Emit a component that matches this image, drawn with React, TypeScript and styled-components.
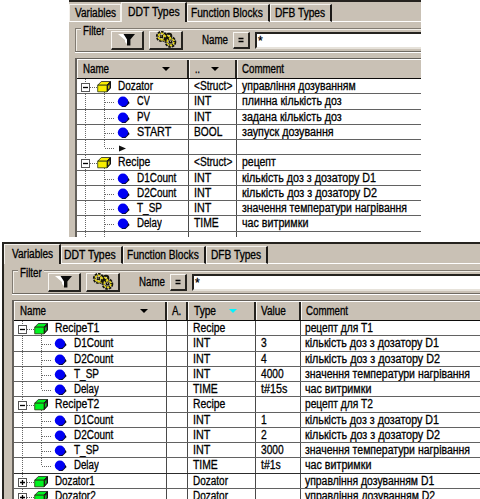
import React, { useLayoutEffect, useRef, useState } from "react";
import styled, { createGlobalStyle } from "styled-components";

const face = "#c9c1b5";
const ROW = 15.25;

const Global = createGlobalStyle`
  body { margin: 0; background: #fff; }
  #root { font-family: "Liberation Sans", Arial, sans-serif; font-size: 12px; color: #000; }
`;

const Page = styled.main`
  width: 480px;
  height: 499px;
  overflow: hidden;
  display: flex;
  flex-direction: column;
  gap: 5px;
  background: #fff;
`;

const Panel = styled.section<{ $left: number; $width: number; $height: number; $framed?: boolean }>`
  box-sizing: border-box;
  flex: none;
  width: ${(p) => p.$width}px;
  height: ${(p) => p.$height}px;
  margin-left: ${(p) => p.$left}px;
  border-top: 2px solid #25231f;
  border-left: ${(p) => (p.$framed ? "2px solid #25231f" : "0")};
  background: ${face};
  overflow: hidden;
`;

const Tabs = styled.div`
  display: flex;
  align-items: flex-end;
  height: 20px;
`;

const Tab = styled.div<{ $width: number; $pad: number; $active?: boolean; $plain?: boolean }>`
  box-sizing: border-box;
  flex: none;
  width: ${(p) => p.$width}px;
  height: ${(p) => (p.$active ? 20 : 18)}px;
  padding-left: ${(p) => p.$pad}px;
  line-height: ${(p) => (p.$active ? 18 : 17)}px;
  border-top: 1px solid #f4f1ec;
  border-left: 1px solid #f4f1ec;
  border-right: ${(p) => (p.$plain ? "1px solid #f4f1ec" : "2px solid #1c1a18")};
  border-bottom: ${(p) => (p.$active ? "0" : "1px solid #fff")};
`;

const TabRest = styled.div`
  flex: 1;
  height: 1px;
  background: #fff;
`;

const Filter = styled.div<{ $inset: number }>`
  box-sizing: border-box;
  display: flex;
  align-items: center;
  height: 24px;
  margin: 6px 0 0 ${(p) => p.$inset}px;
  border-top: 1px solid #817b72;
  border-left: 1px solid #817b72;
  border-bottom: 1px solid #6f6a62;
  box-shadow: inset 1px 1px #f1eee8, 0 1px #fff;
`;

const Legend = styled.span`
  align-self: flex-start;
  width: 26px;
  height: 14px;
  margin: -5px 0 0 5px;
  padding-left: 2px;
  box-sizing: border-box;
  line-height: 14px;
  background: ${face};
`;

const Button = styled.span<{ $width: number; $height: number; $gap: number }>`
  box-sizing: border-box;
  flex: none;
  display: flex;
  align-items: center;
  justify-content: center;
  width: ${(p) => p.$width}px;
  height: ${(p) => p.$height}px;
  margin-left: ${(p) => p.$gap}px;
  border: 1px solid #f8f6f2;
  border-right: 2px solid #25231f;
  border-bottom: 2px solid #25231f;
`;

const FieldName = styled.span`
  width: 31px;
  margin-left: 19px;
  line-height: 14px;
`;

const Input = styled.span`
  box-sizing: border-box;
  flex: 1;
  height: 17px;
  margin-left: 5px;
  padding-left: 1px;
  line-height: 14px;
  background: #fff;
  border-top: 2px solid #25231f;
  border-left: 2px solid #25231f;
  border-bottom: 2px solid #e6e2da;
`;

const Table = styled.div<{ $inset: number }>`
  margin: 6px 0 0 ${(p) => p.$inset}px;
  border-left: 2px solid #64605a;
  border-top: 1px solid #64605a;
`;

const Header = styled.div<{ $columns: string }>`
  display: grid;
  grid-template-columns: ${(p) => p.$columns};
  height: 20px;
  border-top: 1px solid #fff;
  border-bottom: 1px solid #0c0b0a;
  box-sizing: border-box;
  background: ${face};
`;

const HeaderCell = styled.div<{ $pad: number }>`
  box-sizing: border-box;
  display: flex;
  align-items: center;
  position: relative;
  min-width: 0;
  padding-left: ${(p) => p.$pad}px;
  border-left: 1px solid #f8f6f2;
  border-right: 2px solid #25231f;
  line-height: 16px;
  &:last-child { border-right: 0; }
`;

const SortMark = styled.span<{ $x: number; $color: string }>`
  position: absolute;
  left: ${(p) => p.$x}px;
  top: 7px;
  border: 4px solid transparent;
  border-bottom: 0;
  border-top: 4px solid ${(p) => p.$color};
`;

const Row = styled.div<{ $columns: string; $height: number; $dark?: boolean }>`
  box-sizing: border-box;
  display: grid;
  grid-template-columns: ${(p) => p.$columns};
  height: ${(p) => p.$height}px;
  overflow: hidden;
  border-bottom: 1px solid ${(p) => (p.$dark ? "#2c2c2c" : "#626262")};
  background: #fff;
`;

const Cell = styled.div<{ $pad: number }>`
  box-sizing: border-box;
  display: flex;
  min-width: 0;
  padding-left: ${(p) => p.$pad}px;
  line-height: 15px;
  border-right: 1px solid #4a4a4a;
  &:last-child { border-right: 0; }
`;

const Glyphs = styled.svg`
  display: block;
  flex: none;
`;

const Run = styled.span`
  display: inline-block;
  white-space: pre;
  transform-origin: 0 50%;
  -webkit-text-stroke: 0.3px #000;
`;

/* Condenses its text horizontally to the given width. */
function Text({ w, children }: { w: number; children: string }) {
  const ref = useRef<HTMLSpanElement>(null);
  const [scale, setScale] = useState(1);
  useLayoutEffect(() => {
    if (ref.current) setScale(w / ref.current.offsetWidth);
  }, [w, children]);
  return <Run ref={ref} style={{ transform: `scaleX(${scale})` }}>{children}</Run>;
}

type Kind = "open" | "closed" | "leaf" | "last" | "arrow";

function Tree({ kind, color }: { kind: Kind; color: string }) {
  const root = kind === "open" || kind === "closed";
  const dots = { stroke: "#666", strokeDasharray: "1 1", shapeRendering: "crispEdges" as const };
  return (
    <Glyphs width={root ? 41 : 60} height="16" viewBox={`0 0 ${root ? 41 : 60} 16`}>
      <path d="M8.5 0V16" {...dots} />
      {root ? (
        <>
          <path d="M13 8.5H20" {...dots} />
          {kind === "open" && <path d="M27.5 13V16" {...dots} />}
          <rect x="4.5" y="4.5" width="8" height="8" fill="#fff" stroke="#555" />
          <path d={kind === "open" ? "M6 8.5H11" : "M6 8.5H11M8.5 6V11"} stroke="#000" strokeWidth="1.3" />
          <path d="M20.7 6.2L24.3 2.5H33.2L30 6.2Z" fill={color} stroke="#222" strokeWidth=".8" />
          <path d="M30 6.2L33.5 2.5V9L30 12.8Z" fill="#222" stroke="#111" />
          <path d="M20.7 6.2H30V12.8H20.7Z" fill={color} stroke="#26340a" strokeWidth=".8" />
          <path d="M31.2 7V10.3L32.4 9V5.5Z" fill={color} />
        </>
      ) : (
        <>
          <path d={kind === "leaf" ? "M27.5 0V16" : "M27.5 0V8"} {...dots} />
          <path d="M28 8.5H38" {...dots} />
          {kind === "arrow" ? (
            <path d="M42 5.5L49 8.5L42 11.5Z" fill="#111" />
          ) : (
            <>
              <path d="M44.5 13H48.5L52.6 9L50 4.8L46 8Z" fill="#080820" />
              <circle cx="45.9" cy="7.5" r="5.1" fill="#0000f4" />
            </>
          )}
        </>
      )}
    </Glyphs>
  );
}

const Funnel = () => (
  <Glyphs width="18" height="14" viewBox="0 0 18 14">
    <path d="M0 1H8L10 6V12L7 9V7Z" fill="#fff" />
    <path d="M5.5 1H17L12.4 6.5V12.5H9V6.5Z" fill="#0a0a0a" />
  </Glyphs>
);

const Gears = () => (
  <Glyphs width="24" height="17" viewBox="0 0 24 17">
    <g fill="none" stroke="#14140a">
      <circle cx="7.5" cy="5.5" r="4" strokeWidth="3.2" strokeDasharray="2.2 .8" />
      <circle cx="16.5" cy="11" r="4" strokeWidth="3.6" strokeDasharray="2.2 .7" />
      <circle cx="15" cy="5" r="2.3" strokeWidth="2" />
    </g>
    <g fill="none" stroke="#e4d318">
      <circle cx="7.5" cy="5.5" r="3.2" strokeWidth="1.5" strokeDasharray="2.5 1" />
      <circle cx="16.5" cy="11" r="3.4" strokeWidth="1.6" strokeDasharray="2.5 1" />
      <path d="M13 4L17 7M4 7L12 10M9 4L12 6" strokeWidth="1.3" />
    </g>
    <path d="M6 4H9V7H6ZM15 9.5H18V12.5H15ZM10 6L13 7L12 11L10 9Z" fill="#18160a" />
    <path d="M6.5 4.5H8V5.5H6.5ZM16 10H17V11H16Z" fill="#aaa07c" />
  </Glyphs>
);

function FilterBar({ inset }: { inset: number }) {
  return (
    <Filter $inset={inset}>
      <Legend><Text w={22}>Filter</Text></Legend>
      <Button $width={33} $height={19} $gap={4}><Funnel /></Button>
      <Button $width={34} $height={19} $gap={5}><Gears /></Button>
      <FieldName><Text w={26}>Name</Text></FieldName>
      <Button $width={17} $height={17} $gap={0}>
        <Glyphs width="6" height="6" viewBox="0 0 6 6"><path d="M.5 1.5H5.5M.5 4.5H5.5" stroke="#000" strokeWidth="1.3" /></Glyphs>
      </Button>
      <Input><Text w={5}>*</Text></Input>
    </Filter>
  );
}

type TabSpec = { text: string; w: number; width: number; pad: number; active?: boolean; plain?: boolean };
type Column = { text: string; w: number; pad: number; mark?: number; color?: string };
type Item = { kind: Kind; name?: [string, number]; cells: ([string, number] | null)[]; dark?: boolean };

function Grid(props: { inset: number; columns: string; head: Column[]; items: Item[]; pads: number[]; color: string }) {
  const { inset, columns, head, items, pads, color } = props;
  return (
    <Table $inset={inset}>
      <Header $columns={columns}>
        {head.map((h) => (
          <HeaderCell key={h.text} $pad={h.pad}>
            <Text w={h.w}>{h.text}</Text>
            {h.mark && <SortMark $x={h.mark} $color={h.color ?? "#000"} />}
          </HeaderCell>
        ))}
      </Header>
      {items.map((it, i) => (
        <Row key={i} $columns={columns} $dark={it.dark} $height={Math.round((i + 1) * ROW) - Math.round(i * ROW)}>
          <Cell $pad={0}>
            <Tree kind={it.kind} color={color} />
            {it.name && <Text w={it.name[1]}>{it.name[0]}</Text>}
          </Cell>
          {it.cells.map((c, j) => (
            <Cell key={j} $pad={pads[j]}>{c && <Text w={c[1]}>{c[0]}</Text>}</Cell>
          ))}
        </Row>
      ))}
    </Table>
  );
}

function TabBar({ tabs }: { tabs: TabSpec[] }) {
  return (
    <Tabs>
      {tabs.map((t) => (
        <Tab key={t.text} $width={t.width} $pad={t.pad} $active={t.active} $plain={t.plain}>
          <Text w={t.w}>{t.text}</Text>
        </Tab>
      ))}
      <TabRest />
    </Tabs>
  );
}

const d1: [string, number] = ["кількість доз з дозатору D1", 134];
const d2: [string, number] = ["кількість доз з дозатору D2", 135];
const temp: [string, number] = ["значення температури нагрівання", 165];
const hold: [string, number] = ["час витримки", 66];
const int: [string, number] = ["INT", 17];
const time: [string, number] = ["TIME", 25];
const struct: [string, number] = ["<Struct>", 38];
const recipe: [string, number] = ["Recipe", 32];
const dozator: [string, number] = ["Dozator", 35];
const nameD1: [string, number] = ["D1Count", 39];
const nameD2: [string, number] = ["D2Count", 39];
const nameT: [string, number] = ["T_SP", 25];
const nameDelay: [string, number] = ["Delay", 25];

const typeItems: Item[] = [
  { kind: "open", name: dozator, cells: [struct, ["управління дозуванням", 114]] },
  { kind: "leaf", name: ["CV", 13], cells: [int, ["плинна кількість доз", 100]] },
  { kind: "leaf", name: ["PV", 13], cells: [int, ["задана кількість доз", 100]] },
  { kind: "leaf", name: ["START", 34], cells: [["BOOL", 28], ["заупуск дозування", 92]] },
  { kind: "arrow", cells: [null, null] },
  { kind: "open", name: recipe, cells: [struct, ["рецепт", 34]] },
  { kind: "leaf", name: nameD1, cells: [int, d1] },
  { kind: "leaf", name: nameD2, cells: [int, d2] },
  { kind: "leaf", name: nameT, cells: [int, temp] },
  { kind: "leaf", name: nameDelay, cells: [time, hold] },
  { kind: "arrow", cells: [null, null] },
];

const recipeItems = (n: number, values: [string, number][]): Item[] => [
  { kind: "open", name: [`RecipeT${n}`, 44], cells: [null, recipe, null, [`рецепт для T${n}`, 68]] },
  { kind: "leaf", name: nameD1, cells: [null, int, values[0], d1] },
  { kind: "leaf", name: nameD2, cells: [null, int, values[1], d2] },
  { kind: "leaf", name: nameT, cells: [null, int, values[2], temp] },
  { kind: "last", name: nameDelay, cells: [null, time, values[3], hold], dark: n === 2 },
];

const variableItems: Item[] = [
  ...recipeItems(1, [["3", 6], ["4", 6], ["4000", 23], ["t#15s", 26]]),
  ...recipeItems(2, [["1", 6], ["2", 6], ["3000", 23], ["t#1s", 20]]),
  { kind: "closed", name: ["Dozator1", 40], cells: [null, dozator, null, ["управління дозуванням D1", 129]] },
  { kind: "closed", name: ["Dozator2", 41], cells: [null, dozator, null, ["управління дозуванням D2", 130]] },
];

export default function App() {
  return (
    <Page>
      <Global />
      <Panel $left={69} $width={352} $height={237}>
        <TabBar
          tabs={[
            { text: "Variables", w: 41, width: 52, pad: 5, plain: true },
            { text: "DDT Types", w: 52, width: 66, pad: 6, active: true },
            { text: "Function Blocks", w: 72, width: 83, pad: 3 },
            { text: "DFB Types", w: 50, width: 62, pad: 4 },
          ]}
        />
        <FilterBar inset={6} />
        <Grid
          inset={6}
          columns="112px 48px 1fr"
          color="#f8ee00"
          pads={[5, 5]}
          head={[
            { text: "Name", w: 26, pad: 5, mark: 84 },
            { text: "..", w: 5, pad: 5, mark: 21 },
            { text: "Comment", w: 42, pad: 4 },
          ]}
          items={typeItems}
        />
      </Panel>
      <Panel $left={2} $width={478} $height={257} $framed>
        <TabBar
          tabs={[
            { text: "Variables", w: 41, width: 57, pad: 7, active: true },
            { text: "DDT Types", w: 52, width: 62, pad: 2 },
            { text: "Function Blocks", w: 72, width: 83, pad: 3 },
            { text: "DFB Types", w: 50, width: 62, pad: 4 },
          ]}
        />
        <FilterBar inset={8} />
        <Grid
          inset={8}
          columns="153px 21px 68px 45px 1fr"
          color="#00f420"
          pads={[0, 5, 5, 4]}
          head={[
            { text: "Name", w: 26, pad: 5, mark: 125 },
            { text: "A.", w: 9, pad: 4 },
            { text: "Type", w: 22, pad: 5, mark: 40, color: "#00f4ff" },
            { text: "Value", w: 25, pad: 4 },
            { text: "Comment", w: 42, pad: 4 },
          ]}
          items={variableItems}
        />
      </Panel>
    </Page>
  );
}
